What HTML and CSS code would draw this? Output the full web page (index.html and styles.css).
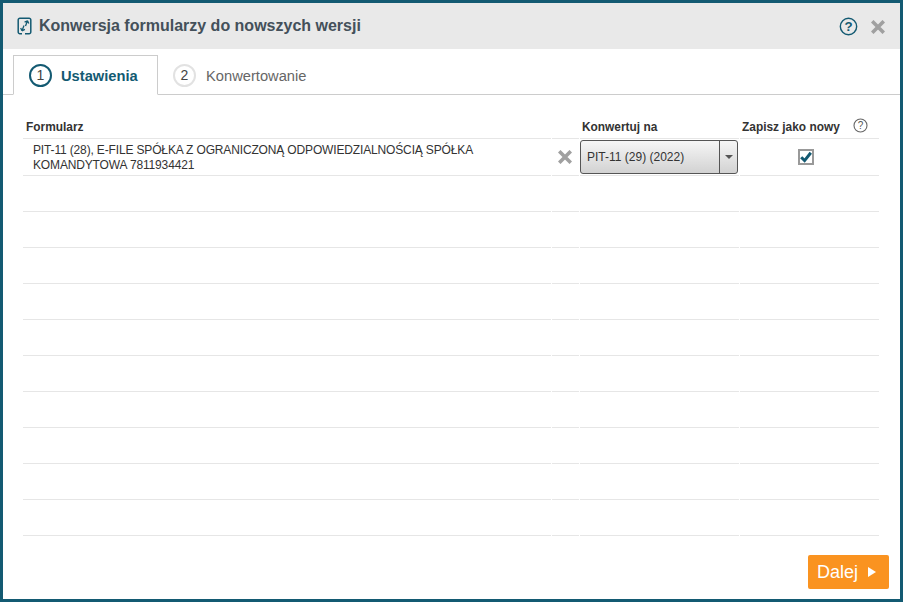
FILE: index.html
```html
<!DOCTYPE html>
<html lang="pl">
<head>
<meta charset="utf-8">
<title>Konwersja formularzy do nowszych wersji</title>
<link rel="stylesheet" href="styles.css">
</head>
<body>
<div class="dialog">
  <header class="head">
    <svg class="logo" viewBox="0 0 16 18" width="16" height="18" fill="none" stroke="#135a72"><path d="M5 16.7H3A1.7 1.7 0 0 1 1.2 15V3A1.7 1.7 0 0 1 3 1.2H12A1.7 1.7 0 0 1 13.8 3V15A1.7 1.7 0 0 1 12 16.7H8" stroke-width="1.5"/><path d="M8.5 9 10.5 3.8M10.5 3.8 7.6 5.2M10.5 3.8 11.8 6.6M7 8.5 5 13.8M5 13.8 7.9 12.4M5 13.8 3.7 11" stroke-width="1.3"/></svg>
    <h1 class="title">Konwersja formularzy do nowszych wersji</h1>
    <svg class="help" viewBox="0 0 20 20" width="19" height="19"><circle cx="10" cy="10" r="8.6" fill="none" stroke="#135a72" stroke-width="1.5"/><text x="10" y="14.8" text-anchor="middle" class="help-q">?</text></svg>
    <svg class="close" viewBox="0 0 14 14" width="14" height="14"><path d="M2.5 2.5 11.5 11.5M11.5 2.5 2.5 11.5" stroke="#a0a0a0" stroke-width="3.6" stroke-linecap="square"/></svg>
  </header>
  <nav class="tabs">
    <div class="tab tab-active"><span class="num num-active">1</span><span class="tab-label">Ustawienia</span></div>
    <div class="tab tab-idle"><span class="num">2</span><span class="tab-label">Konwertowanie</span></div>
  </nav>
  <main class="content">
    <div class="row row-head">
      <div class="c1 th">Formularz</div>
      <div class="c2"></div>
      <div class="c3 th">Konwertuj na</div>
      <div class="c4 th"><span>Zapisz jako nowy</span>
        <svg class="mini-help" viewBox="0 0 15 15" width="15" height="15"><circle cx="7.5" cy="7.5" r="6.5" fill="none" stroke="#666" stroke-width="1.1"/><text x="7.5" y="11" text-anchor="middle" class="mini-q">?</text></svg>
      </div>
    </div>
    <div class="row row-first">
      <div class="c1 form-name">PIT-11 (28), E-FILE SPÓŁKA Z OGRANICZONĄ ODPOWIEDZIALNOŚCIĄ SPÓŁKA KOMANDYTOWA 7811934421</div>
      <div class="c2 center"><svg class="row-x" viewBox="0 0 14 14" width="14" height="14"><path d="M2.5 2.5 11.5 11.5M11.5 2.5 2.5 11.5" stroke="#a0a0a0" stroke-width="3.6" stroke-linecap="square"/></svg></div>
      <div class="c3"><div class="select"><span class="select-val">PIT-11 (29) (2022)</span><span class="select-btn"><i class="caret"></i></span></div></div>
      <div class="c4 center c4-check"><span class="check"><svg viewBox="0 0 12 12" width="12" height="12"><path d="M1.2 6.2 4.6 9.6 10.8 1.8" fill="none" stroke="#135a72" stroke-width="3"/></svg></span></div>
    </div>
    <div class="row"><div class="c1"></div><div class="c2"></div><div class="c3"></div><div class="c4"></div></div>
    <div class="row"><div class="c1"></div><div class="c2"></div><div class="c3"></div><div class="c4"></div></div>
    <div class="row"><div class="c1"></div><div class="c2"></div><div class="c3"></div><div class="c4"></div></div>
    <div class="row"><div class="c1"></div><div class="c2"></div><div class="c3"></div><div class="c4"></div></div>
    <div class="row"><div class="c1"></div><div class="c2"></div><div class="c3"></div><div class="c4"></div></div>
    <div class="row"><div class="c1"></div><div class="c2"></div><div class="c3"></div><div class="c4"></div></div>
    <div class="row"><div class="c1"></div><div class="c2"></div><div class="c3"></div><div class="c4"></div></div>
    <div class="row"><div class="c1"></div><div class="c2"></div><div class="c3"></div><div class="c4"></div></div>
    <div class="row"><div class="c1"></div><div class="c2"></div><div class="c3"></div><div class="c4"></div></div>
    <div class="row"><div class="c1"></div><div class="c2"></div><div class="c3"></div><div class="c4"></div></div>
  </main>
  <footer class="foot">
    <button class="next" type="button">Dalej<i class="next-arrow"></i></button>
  </footer>
</div>
</body>
</html>
```
FILE: styles.css
```css
* { box-sizing: border-box; }
html, body { margin: 0; padding: 0; height: 100%; background: #fff; overflow: hidden; }
body { font-family: "Liberation Sans", Arial, sans-serif; color: #333; }
.dialog { width: 903px; height: 602px; border: 3px solid #135a72; background: #fff; display: flex; flex-direction: column; }
.head { height: 46px; flex: none; background: #e9e9e9; display: flex; align-items: center; padding: 0 15px 0 14px; }
.logo { flex: none; margin-right: 6px; }
.title { margin: 0; flex: 1; font-size: 16px; font-weight: bold; color: #44505a; }
.help { margin-right: 13px; }
.help-q { font: bold 14px "Liberation Sans", Arial, sans-serif; fill: #135a72; }
.close { margin-top: 1px; }
.tabs { height: 46px; flex: none; display: flex; align-items: flex-end; padding-left: 10px; border-bottom: 1px solid #ccc; }
.tab { height: 40px; display: flex; align-items: center; gap: 9px; font-size: 14.7px; color: #666; padding: 0 15px; margin-bottom: -1px; }
.tab-idle { gap: 10px; }
.tab-label { position: relative; top: 1px; }
.tab-active { width: 145px; border: 1px solid #ccc; border-bottom-color: #fff; background: #fff; font-weight: bold; color: #135a72; }
.num { width: 23px; height: 23px; border-radius: 50%; border: 2px solid #e2e2e2; background: #fff; display: flex; align-items: center; justify-content: center; font-size: 14px; font-weight: normal; color: #444; flex: none; }
.num-active { border-color: #135a72; }
.content { flex: 1; padding: 23px 21px 0 20px; }
.row { display: flex; gap: 1px; height: 36px; }
.row-head { height: 21px; }
.row-first { height: 37px; }
.c1, .c2, .c3, .c4 { border-bottom: 1px solid #e6e6e6; flex: none; }
.c1 { width: 528px; }
.c2 { width: 27px; }
.c3 { width: 159px; }
.c4 { width: 139px; }
.th { font-size: 11.9px; font-weight: bold; color: #333; padding: 2px 0 0 3px; }
.c3.th { padding-left: 2px; }
.c4.th { display: flex; justify-content: space-between; padding: 2px 11px 0 2px; }
.mini-help { margin-top: -2px; }
.mini-q { font: 10px "Liberation Sans", Arial, sans-serif; fill: #555; }
.form-name { font-size: 12px; letter-spacing: -0.15px; line-height: 15px; padding: 4px 20px 0 10px; color: #333; }
.center { display: flex; align-items: center; justify-content: center; }
.row-x { margin-right: 2px; }
.c4-check { padding-right: 8px; }
.select { width: 158px; height: 34px; margin-top: 1px; border: 1px solid #555; border-radius: 3px; background: linear-gradient(#f6f6f6, #d2d2d2); display: flex; font-size: 12px; color: #333; }
.select-val { flex: 1; align-self: center; padding-left: 6px; }
.select-btn { width: 18px; border-left: 1px solid #555; display: flex; align-items: center; justify-content: center; }
.caret { width: 0; height: 0; border: 4px solid transparent; border-top-color: #555; border-bottom-width: 0; }
.check { width: 16px; height: 16px; border: 2px solid #999; background: #fff; display: flex; align-items: center; justify-content: center; }
.foot { flex: 1; display: flex; justify-content: flex-end; align-items: flex-start; padding: 19px 11px 0 0; }
.next { width: 81px; height: 34px; border: 0; border-radius: 2px; background: #fa9320; color: #fff; font: 18px "Liberation Sans", Arial, sans-serif; display: flex; align-items: center; padding: 0 0 0 9px; }
.next-arrow { width: 0; height: 0; margin-left: 10px; border: 5px solid transparent; border-left: 8px solid #fff; border-right-width: 0; }
```
